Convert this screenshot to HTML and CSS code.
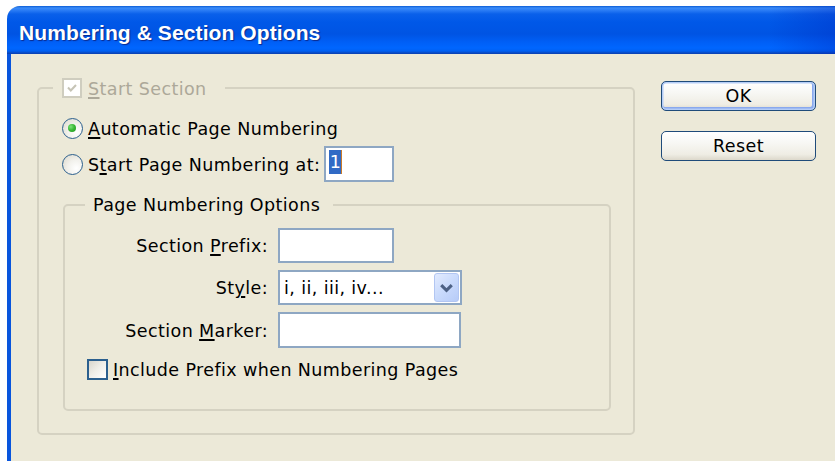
FILE: index.html
```html
<!DOCTYPE html>
<html lang="en">
<head>
<meta charset="utf-8">
<title>Numbering &amp; Section Options</title>
<link rel="stylesheet" href="styles.css">
</head>
<body>
<div class="window">
  <div class="titlebar"><span class="title">Numbering &amp; Section Options</span></div>
  <div class="client">
    <fieldset class="group outer">
      <legend class="legend-check">
        <span class="check disabled">
          <svg viewBox="0 0 20 20" width="20" height="20"><path d="M5 9.5 L8.5 13 L15 6.2" fill="none" stroke="#c6c4b6" stroke-width="2.6"/></svg>
        </span>
        <span class="muted"><u>S</u>tart Section</span>
      </legend>
      <div class="outer-body">
        <div class="opt-row">
          <span class="radio on"></span>
          <span class="opt-text"><u>A</u>utomatic Page Numbering</span>
        </div>
        <div class="opt-row">
          <span class="radio"></span>
          <span class="opt-text">S<u>t</u>art Page Numbering at:</span>
          <span class="field start-at"><span class="selected">1</span></span>
        </div>
        <fieldset class="group inner">
          <legend class="legend-plain">Page Numbering Options</legend>
          <div class="form-grid">
            <span class="lbl">Section <u>P</u>refix:</span>
            <span class="field prefix"></span>
            <span class="lbl">St<u>y</u>le:</span>
            <span class="combo">
              <span class="combo-text">i, ii, iii, iv...</span>
              <span class="combo-btn">
                <svg viewBox="0 0 24 28" width="24" height="28"><path d="M6.5 11 L12 16.5 L17.5 11" fill="none" stroke="#4d6185" stroke-width="3.2"/></svg>
              </span>
            </span>
            <span class="lbl">Section <u>M</u>arker:</span>
            <span class="field marker"></span>
          </div>
          <div class="check-row">
            <span class="check"></span>
            <span class="opt-text"><u>I</u>nclude Prefix when Numbering Pages</span>
          </div>
        </fieldset>
      </div>
    </fieldset>
    <div class="buttons">
      <button class="btn default" type="button">OK</button>
      <button class="btn" type="button">Reset</button>
    </div>
  </div>
</div>
</body>
</html>
```

FILE: styles.css
```css
html, body {
  margin: 0;
  padding: 0;
  background: #ffffff;
  overflow: hidden;
}

body {
  font-family: "DejaVu Sans", Verdana, sans-serif;
  font-size: 17.5px;
  letter-spacing: 0.4px;
  color: #000;
}

u {
  text-decoration: underline;
  text-underline-offset: 2px;
  text-decoration-thickness: 1.5px;
}

/* window frame */
.window {
  margin: 6px 0 0 7px;
  height: 455px;
  border-top-left-radius: 13px;
  overflow: hidden;
  background: #ece9d8;
}

.titlebar {
  height: 48px;
  display: flex;
  align-items: center;
  padding-left: 12px;
  background:
    linear-gradient(to right, rgba(0, 40, 190, 0) 92%, rgba(0, 40, 190, 0.35) 100%),
    linear-gradient(to bottom,
      #0a5bd6 0px, #3b8cf8 2px, #2d7ef6 4px, #0a60ea 8px,
      #0058e8 16px, #0054e3 28px, #005ff6 36px, #0066ff 42px,
      #0060f2 45px, #0a48c0 47px, #0a3fb0 48px);
}

.title {
  font-family: "Liberation Sans", Arial, sans-serif;
  font-weight: bold;
  font-size: 21px;
  letter-spacing: 0.1px;
  color: #fff;
  text-shadow: 1px 1px 1px #0b2a8c;
  margin-top: 5px;
}

.client {
  display: flex;
  align-items: flex-start;
  height: 407px;
  border-left: 4px solid #0855dd;
  box-sizing: border-box;
  padding: 24px 0 0 26px;
}

/* group boxes */
.group {
  margin: 0;
  padding: 0;
  border: 2px solid #d5d2c2;
  border-radius: 5px;
  min-width: 0;
}

.outer {
  width: 598px;
  box-sizing: border-box;
  padding-bottom: 22px;
}

.legend-check {
  margin-left: 14px;
  padding: 0 18px 0 9px;
  height: 20px;
  display: flex;
  align-items: center;
  gap: 6px;
  line-height: 20px;
}

.muted {
  color: #aca899;
  padding-top: 1px;
}

.outer-body {
  padding: 12px 23px 0 23px;
}

.opt-row {
  display: flex;
  align-items: center;
  height: 36px;
  line-height: 20px;
}

.opt-text {
  margin-left: 5px;
  padding-top: 2px;
  white-space: nowrap;
}

/* radio buttons */
.radio {
  width: 21px;
  height: 21px;
  box-sizing: border-box;
  border-radius: 50%;
  border: 1.5px solid #2b5f8e;
  background: radial-gradient(circle at 70% 70%, #ffffff 0%, #f2f1ec 45%, #d9d6c8 100%);
  position: relative;
  flex: none;
}

.radio.on::after {
  content: "";
  position: absolute;
  left: 5px;
  top: 5px;
  width: 8px;
  height: 8px;
  border-radius: 50%;
  background: radial-gradient(circle at 35% 35%, #7ee27a 0%, #3cbb38 45%, #1e901c 100%);
}

/* checkboxes */
.check {
  width: 21px;
  height: 21px;
  box-sizing: border-box;
  border: 2px solid #2b5f8e;
  background: linear-gradient(135deg, #d8d6cc 0%, #eeede7 45%, #ffffff 100%);
  flex: none;
  display: flex;
  align-items: center;
  justify-content: center;
}

.check.disabled {
  width: 20px;
  height: 20px;
  border: 2px solid #cfcdbf;
  background: #fff;
}

.check.disabled svg {
  width: 16px;
  height: 16px;
}

/* text fields */
.field {
  display: block;
  box-sizing: border-box;
  border: 2px solid #8ea7c3;
  background: #fff;
}

.start-at {
  width: 70px;
  height: 36px;
  margin-left: 4px;
  padding: 2px 0 0 3px;
}

.selected {
  display: inline-block;
  width: 12px;
  height: 24px;
  line-height: 24px;
  text-align: center;
  letter-spacing: 0;
  background: #316ac5;
  color: #fff;
  box-shadow: 1px 0 0 #c87a2a;
}

.inner {
  margin: 13px 0 0 1px;
  padding: 0 0 29px 0;
  width: 548px;
  box-sizing: border-box;
}

.legend-plain {
  margin-left: 20px;
  padding: 0 13px 0 8px;
  height: 20px;
  line-height: 20px;
}

.form-grid {
  display: grid;
  grid-template-columns: 203px auto;
  grid-template-rows: 35px 35px 36px;
  column-gap: 10px;
  row-gap: 7px;
  align-items: center;
  justify-items: start;
  margin-top: 13px;
  line-height: 20px;
}

.lbl {
  justify-self: end;
  white-space: nowrap;
  padding-top: 1px;
}

.prefix {
  width: 116px;
  height: 35px;
}

.marker {
  width: 183px;
  height: 36px;
}

/* dropdown */
.combo {
  width: 184px;
  height: 35px;
  box-sizing: border-box;
  border: 2px solid #8ea7c3;
  background: #fff;
  display: flex;
  align-items: center;
  justify-content: space-between;
  padding: 0 1px 0 4px;
}

.combo-text {
  white-space: nowrap;
}

.combo-btn {
  width: 25px;
  height: 29px;
  box-sizing: border-box;
  border: 1px solid #b2c6f2;
  border-radius: 3px;
  background: linear-gradient(135deg, #e2ebfe 0%, #c9dafc 50%, #b6cbf8 100%);
  display: flex;
  align-items: center;
  justify-content: center;
}

.check-row {
  display: flex;
  align-items: center;
  margin: 10px 0 0 22px;
  height: 22px;
  line-height: 20px;
}

/* command buttons */
.buttons {
  display: flex;
  flex-direction: column;
  gap: 20px;
  margin: 3px 0 0 26px;
}

.btn {
  width: 155px;
  height: 30px;
  box-sizing: border-box;
  border: 1.5px solid #1f4b7a;
  border-radius: 5px;
  background: linear-gradient(to bottom, #ffffff 0%, #f8f8f5 35%, #efede4 80%, #dcd8cb 100%);
  font-family: "DejaVu Sans", Verdana, sans-serif;
  font-size: 17.5px;
  letter-spacing: 0.4px;
  color: #000;
  padding: 0;
  line-height: 26px;
}

.btn.default {
  box-shadow: inset 0 0 0 1.5px #b5cdf6, inset -1px -1px 0 2px #8aa9ee;
}
```
